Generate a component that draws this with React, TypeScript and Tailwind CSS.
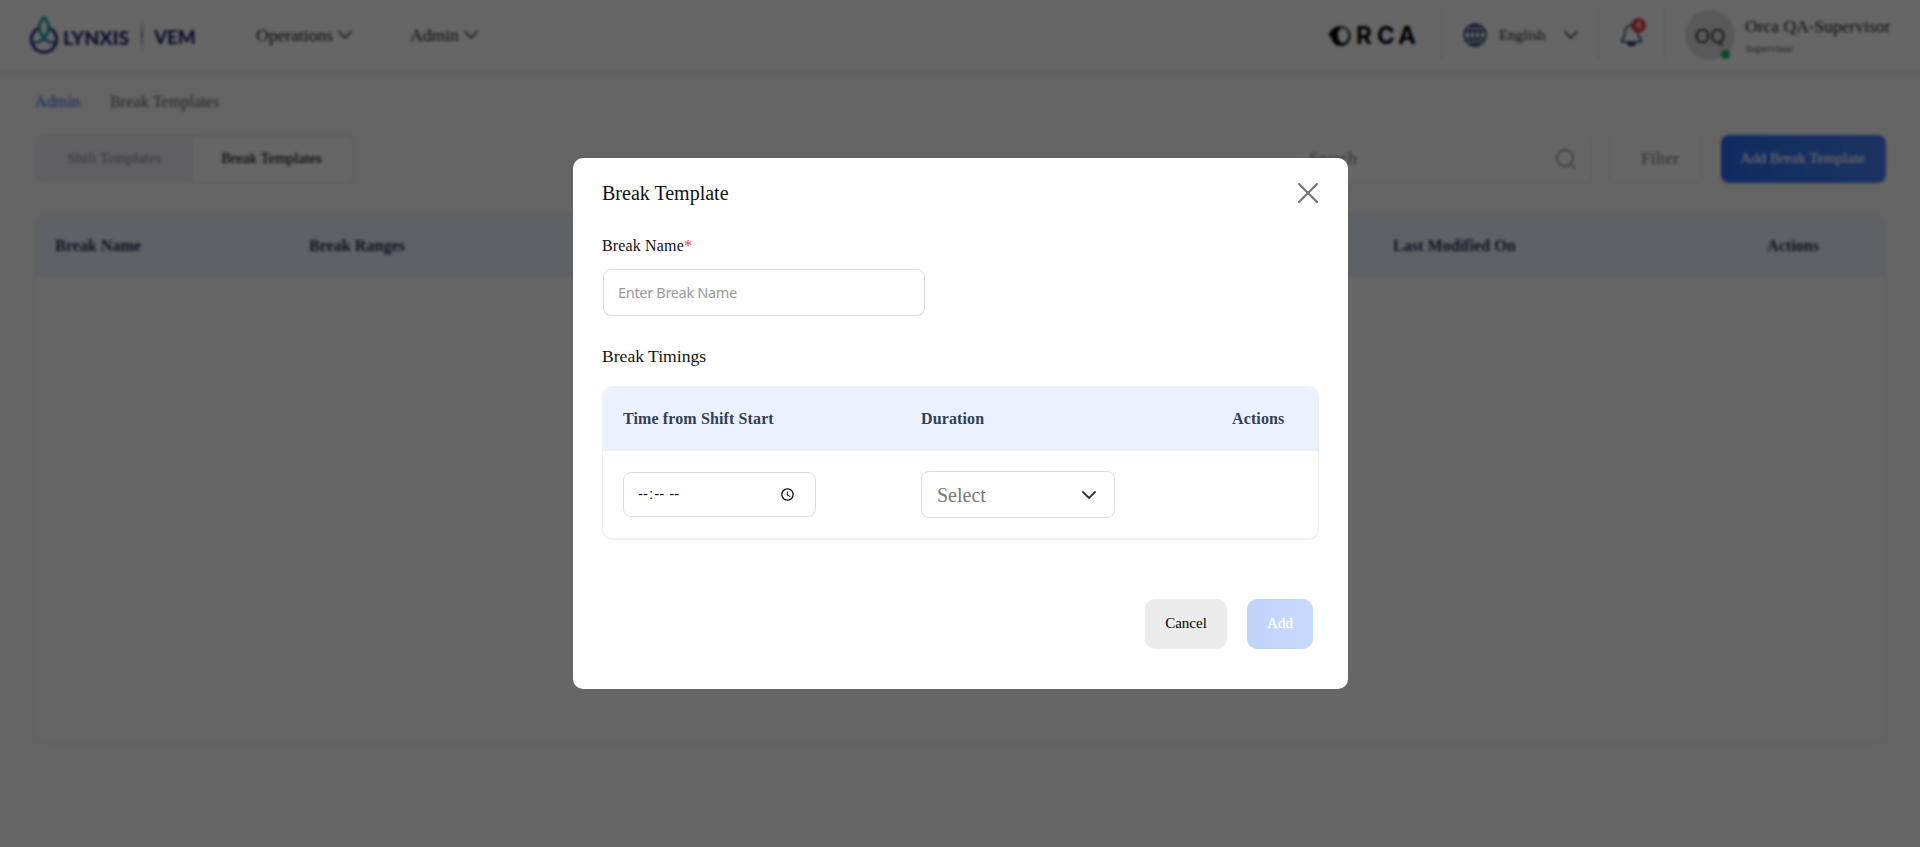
import React from "react";

const serif = "font-['Liberation_Serif',serif]";

function Chevron({ className = "", width = 14 }: { className?: string; width?: number }) {
  return (
    <svg className={className} width={width} height="10" viewBox="0 0 14 10" fill="none" stroke="currentColor" strokeWidth="1.4" strokeLinecap="round" strokeLinejoin="round">
      <path d="M1 1.500 7 8l6-6.500" />
    </svg>
  );
}

function LynxisLogo() {
  return (
    <div className="flex h-[40px] w-[168px] shrink-0 items-center text-[#23246e]">
      <svg width="30" height="40" viewBox="0 0 30 40" fill="none" strokeWidth="3">
        <path d="M9 13.500A12.600 12.600 0 1 0 21 13.500" stroke="#23246e" />
        <path d="M3 27c5 1.500 9-.5 12-4C18 26.500 22 28.500 27 27" stroke="#2a6f9e" strokeWidth="2.600" />
        <path d="M15 2.500c-6 6-6.500 14 0 20c6.500-6 6-14 0-20Z" stroke="#17a5a0" strokeWidth="3" />
      </svg>
      <span className="ml-[4px] mt-[5px] w-[67px] font-['Lato',sans-serif] text-[19.5px] font-black leading-none">LYNXIS</span>
      <span className="ml-[11px] h-[32px] w-[2px] bg-linear-to-b from-transparent via-[#6f70a4] to-transparent" />
      <span className="ml-[11px] mt-[5px] font-['Lato',sans-serif] text-[18.7px] font-black leading-none">VEM</span>
    </div>
  );
}

function OrcaLogo() {
  return (
    <div className="mt-[2px] flex h-[22px] w-[90px] items-center text-black">
      <svg width="22" height="20" viewBox="0 0 22 20">
        <path fillRule="evenodd" fill="#000" d="M0 8C2 3 7 0 12 0c5 0 9.500 4 9.500 10S17 20 12 20C7 20 3 17 2.500 11L0 10ZM10 4C8 7 8.500 15 13 17c3.500 0 6.500-3 6.500-7S17 2.500 13 3Z" />
        <path d="M11 2.500c3-.8 6 .5 7.500 3" stroke="#bbb" strokeWidth="1.500" fill="none" />
      </svg>
      <span className="ml-[5px] w-[21px] font-['Inter',sans-serif] text-[24px] font-bold leading-none">R</span>
      <span className="w-[21px] font-['Inter',sans-serif] text-[24px] font-bold leading-none">C</span>
      <span className="font-['Inter',sans-serif] text-[24px] font-bold leading-none">A</span>
    </div>
  );
}

function Header() {
  return (
    <header className="flex h-[70px] shrink-0 items-center bg-white pl-[29px] pr-[29px] text-[#222] shadow-[0_2px_10px_rgba(0,0,0,0.1)]">
      <LynxisLogo />
      <nav className="ml-[59px] flex text-[17.6px]">
        <a className="flex w-[154px] items-center gap-[5px]">
          Operations <Chevron />
        </a>
        <a className="flex items-center gap-[5px]">
          Admin <Chevron />
        </a>
      </nav>
      <div className="ml-auto flex items-center">
        <OrcaLogo />
        <div className="ml-[22px] h-[50px] w-px bg-[#e6e6ee]" />
        <svg className="ml-[21px]" width="24" height="24" viewBox="0 0 24 24" fill="none" stroke="#23306e" strokeWidth="1.700">
          <circle cx="12" cy="12" r="10.700" />
          <ellipse cx="12" cy="12" rx="5" ry="10.700" />
          <path d="M12 1.300v21.400M2.500 8h19M2.500 16h19" />
        </svg>
        <span className="ml-[12px] w-[65px] text-[15.2px]">English</span>
        <Chevron />
        <div className="ml-[20px] h-[50px] w-px bg-[#e6e6ee]" />
        <div className="relative ml-[21px] h-[24px] w-[24px]">
          <svg width="24" height="24" viewBox="0 0 24 24" fill="none" stroke="#23306e" strokeWidth="1.600" strokeLinejoin="round">
            <path d="M11.500 2C7.500 2 5 5.500 5 9.500c0 4.500-1.200 5.500-3 7.500c-.8 1.200-.3 2 1 2h17c1.300 0 1.800-.8 1-2c-1.800-2-3-3-3-7.500C18 5.500 15.500 2 11.500 2Z" />
            <path d="M7.500 19.500c1 4 7 4 8 0" fill="#23306e" />
          </svg>
          <span className="absolute -top-[5px] left-[11px] flex h-[15px] w-[15px] items-center justify-center rounded-full bg-[#e5393d] font-['Open_Sans',sans-serif] text-[10px] font-semibold text-white">4</span>
        </div>
        <div className="ml-[20px] h-[50px] w-px bg-[#e6e6ee]" />
        <div className="relative ml-[20px] flex h-[50px] w-[50px] items-center justify-center rounded-full bg-[#dedede] pt-[2px] font-['Open_Sans',sans-serif] text-[20px] text-[#222]">
          OQ
          <span className="absolute bottom-px right-[5px] h-[9px] w-[9px] rounded-full bg-[#12b76a]" />
        </div>
        <div className="ml-[10px] w-[146px] whitespace-nowrap">
          <div className="text-[17.5px] leading-[22px]">Orca QA-Supervisor</div>
          <div className="mt-[3px] text-[11px] leading-[16px] text-[#555]">Supervisor</div>
        </div>
      </div>
    </header>
  );
}

function Page() {
  return (
    <div className="flex h-[847px] flex-col bg-[#fafafa]">
      <Header />
      <main className="flex flex-col pl-[34px] pr-[34px]">
        <div className="ml-px mt-[21px] flex h-[22px] items-center gap-[30px] text-[16.2px] text-[#666]">
          <span className="text-[#2a6cf2]">Admin</span>
          <span className="tracking-[0.05px]">Break Templates</span>
        </div>
        <div className="ml-px mt-[20px] flex h-[51px] items-center">
          <div className="flex h-[48px] w-[319px] rounded-md bg-[#f0f0f5] text-[15px]">
            <div className="flex w-[156px] items-center justify-center pl-[3px] text-[#888]">Shift Templates</div>
            <div className="flex flex-1 items-center justify-center rounded-md border border-[#e2e2e8] bg-white pr-[2px] text-[#111] [-webkit-text-stroke:0.2px]">Break Templates</div>
          </div>
          <div className="ml-auto flex h-[51px] w-[297px] items-center justify-between rounded-lg border border-[#eeeef2] bg-white pl-[14px] pr-[14px] text-[17.6px] text-[#777]">
            Search
            <svg width="20" height="20" viewBox="0 0 20 20" fill="none" stroke="#777" strokeWidth="1.300">
              <circle cx="9" cy="9" r="8" />
              <path d="m14.500 15 4.500 4.500" />
            </svg>
          </div>
          <div className="ml-[19px] flex h-[51px] w-[91px] items-center rounded-lg border border-[#eeeef2] bg-white pl-[30px] text-[17.6px] text-[#777]">Filter</div>
          <div className="ml-[20px] flex h-[48px] w-[165px] items-center justify-center rounded-lg bg-linear-to-r from-[#2a6cf2] to-[#4880f2] pr-[2px] text-[15px] text-white [-webkit-text-stroke:0.2px]">Add Break Template</div>
        </div>
        <section className="mt-[28px] h-[530px] overflow-hidden rounded-xl border border-[#f0f3fb] bg-white shadow-[0_2px_2px_#eef0fa]">
          <div className="flex h-[65px] items-center bg-[#ebf2fe] pl-[20px] pr-[66px] text-[16px] font-bold tracking-[0.05px] text-[#2b3650]">
            <span className="w-[254px]">Break Name</span>
            <span className="w-[1084px]">Break Ranges</span>
            <span>Last Modified On</span>
            <span className="ml-auto">Actions</span>
          </div>
        </section>
      </main>
    </div>
  );
}

function BreakTemplateDialog() {
  return (
    <div role="dialog" className="mt-[158px] ml-px flex h-[531px] w-[775px] flex-col self-start rounded-[10px] bg-white pl-[29px] pr-[29px] text-[#111]">
      <div className="flex h-[70px] shrink-0 items-center justify-between pr-px">
        <h2 className="text-[20px]">Break Template</h2>
        <svg width="20" height="20" viewBox="0 0 20 20" fill="none" stroke="#777" strokeWidth="2.300" strokeLinecap="round">
          <path d="M1 1l18 18M19 1 1 19" />
        </svg>
      </div>
      <label className="mt-[6px] text-[16px] leading-[24px] tracking-[0.15px]">
        Break Name<span className="text-[#f33]">*</span>
      </label>
      <input
        className="ml-px mt-[11px] h-[47px] w-[322px] shrink-0 rounded-lg border border-[#dcdce8] px-[14px] pb-[2px] font-['Noto_Sans',sans-serif] text-[14.5px] tracking-[-0.32px] placeholder:text-[#999]"
        placeholder="Enter Break Name"
      />
      <h3 className="mt-[27px] text-[17.6px] leading-[26px]">Break Timings</h3>
      <section className="mt-[17px] h-[153px] w-[717px] shrink-0 overflow-hidden rounded-[10px] border border-[#ebf0fe] shadow-[0_1px_1px_#ebf0fe]">
        <div className="flex h-[64px] items-center bg-[#ebf2fe] pl-[20px] text-[16px] font-bold tracking-[0.12px] text-[#333f55]">
          <span className="w-[298px]">Time from Shift Start</span>
          <span className="w-[311px]">Duration</span>
          <span>Actions</span>
        </div>
        <div className="flex h-[87px] items-center pl-[20px]">
          <input type="time" className="h-[45px] w-[193px] rounded-lg border border-[#dcdce8] pl-[13px] pr-[16px] font-['Liberation_Sans',sans-serif] text-[15px] tracking-[0.1px]" />
          <div className="ml-[105px] flex h-[47px] w-[194px] items-center justify-between rounded-lg border border-[#dcdee4] pl-[15px] pr-[18px] text-[20px] text-[#777]">
            Select
            <svg width="14" height="8" viewBox="0 0 14 8" fill="none" stroke="#333a44" strokeWidth="1.800" strokeLinecap="round" strokeLinejoin="round">
              <path d="m1 1 6 6 6-6" />
            </svg>
          </div>
        </div>
      </section>
      <div className="mt-[60px] flex justify-end gap-[20px] pr-[6px] text-[15px]">
        <button className="h-[50px] w-[82px] rounded-[10px] bg-[#ececec] pb-px text-black">Cancel</button>
        <button className="h-[50px] w-[66px] rounded-[10px] bg-linear-to-r from-[#bfd3fb] to-[#c8d9fb] pb-px text-white [-webkit-text-stroke:0.3px]">Add</button>
      </div>
    </div>
  );
}

export default function App() {
  return (
    <div className={`${serif} relative h-[847px] w-full overflow-hidden`}>
      <Page />
      <div className="fixed inset-0 flex justify-center bg-black/60 backdrop-blur-[1.5px]">
        <BreakTemplateDialog />
      </div>
    </div>
  );
}
